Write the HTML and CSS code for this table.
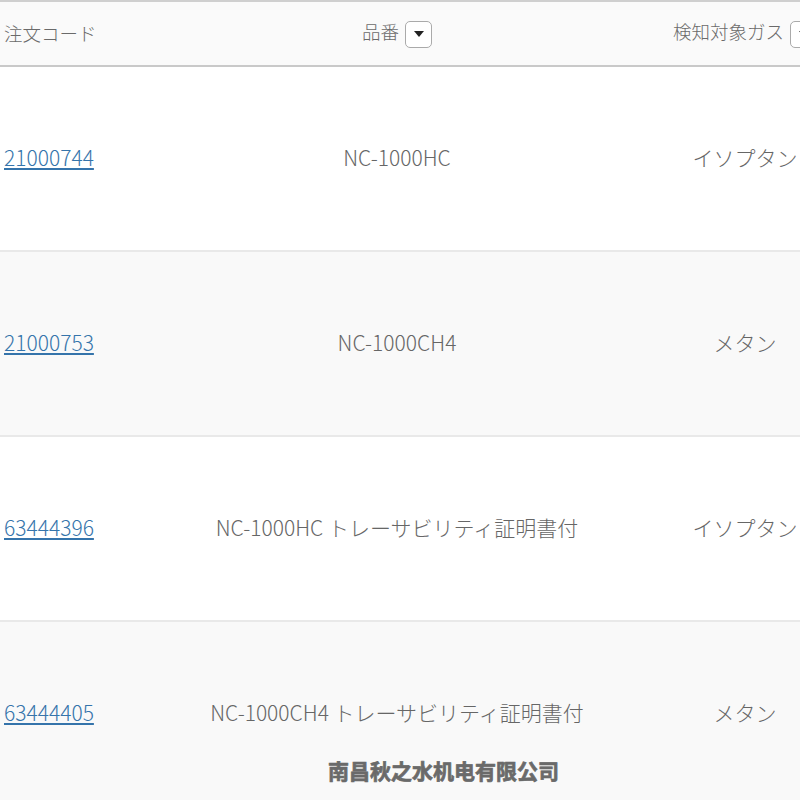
FILE: index.html
```html
<!DOCTYPE html>
<html lang="ja">
<head>
  <meta charset="UTF-8">
  <title>注文一覧</title>
  <link rel="stylesheet" href="styles.css">
</head>
<body>

<div class="order-table">
  <div class="row head">
    <div class="cell code">注文コード</div>
    <div class="cell name">品番 <span class="sort-btn"><span class="tri"></span></span></div>
    <div class="cell gas">検知対象ガス <span class="sort-btn"><span class="tri"></span></span></div>
  </div>

  <div class="row">
    <div class="cell code"><a href="#">21000744</a></div>
    <div class="cell name">NC-1000HC</div>
    <div class="cell gas">イソプタン</div>
  </div>

  <div class="row alt">
    <div class="cell code"><a href="#">21000753</a></div>
    <div class="cell name">NC-1000CH4</div>
    <div class="cell gas">メタン</div>
  </div>

  <div class="row">
    <div class="cell code"><a href="#">63444396</a></div>
    <div class="cell name">NC-1000HC トレーサビリティ証明書付</div>
    <div class="cell gas">イソプタン</div>
  </div>

  <div class="row alt">
    <div class="cell code"><a href="#">63444405</a></div>
    <div class="cell name">NC-1000CH4 トレーサビリティ証明書付</div>
    <div class="cell gas">メタン</div>
  </div>
</div>

<div class="watermark">南昌秋之水机电有限公司</div>

</body>
</html>
```

FILE: styles.css
```css
* { box-sizing: border-box; margin: 0; padding: 0; }
body {
  font-family: "Noto Sans CJK JP", "Noto Sans", sans-serif;
  font-weight: 300;
  background: #fff;
  color: #666;
  width: 800px;
  height: 800px;
  overflow: hidden;
  position: relative;
}

.order-table {
  width: 876px;
  border-top: 2px solid #cfcfcf;
}
.row {
  display: grid;
  grid-template-columns: 180px 434px 262px;
  align-items: center;
  height: 185px;
  padding-bottom: 4px;
  border-bottom: 2px solid #e9e9e9;
  font-size: 21px;
}
.row.alt { background: #f9f9f9; }
.row.head {
  height: 65px;
  padding-bottom: 1px;
  background: #fafafa;
  border-bottom: 2px solid #c9c9c9;
  font-size: 18.5px;
  color: #6a6a6a;
}

.cell.code { padding-left: 4px; }
.cell.name, .cell.gas {
  text-align: center;
  white-space: nowrap;
}
.cell a {
  color: #3574ab;
  text-decoration: underline;
  text-underline-offset: 2px;
}

.sort-btn {
  display: inline-flex;
  align-items: center;
  justify-content: center;
  width: 27px;
  height: 27px;
  margin-left: 2px;
  vertical-align: middle;
  border: 1px solid #aaa;
  border-radius: 5px;
  background: #fff;
}
.tri {
  width: 0;
  height: 0;
  border-left: 5px solid transparent;
  border-right: 5px solid transparent;
  border-top: 6px solid #222;
}

.watermark {
  position: absolute;
  left: 328px;
  top: 755px;
  font-size: 21px;
  font-weight: bold;
  color: #6a6a6a;
  -webkit-text-stroke: 0.7px #6a6a6a;
}
```
